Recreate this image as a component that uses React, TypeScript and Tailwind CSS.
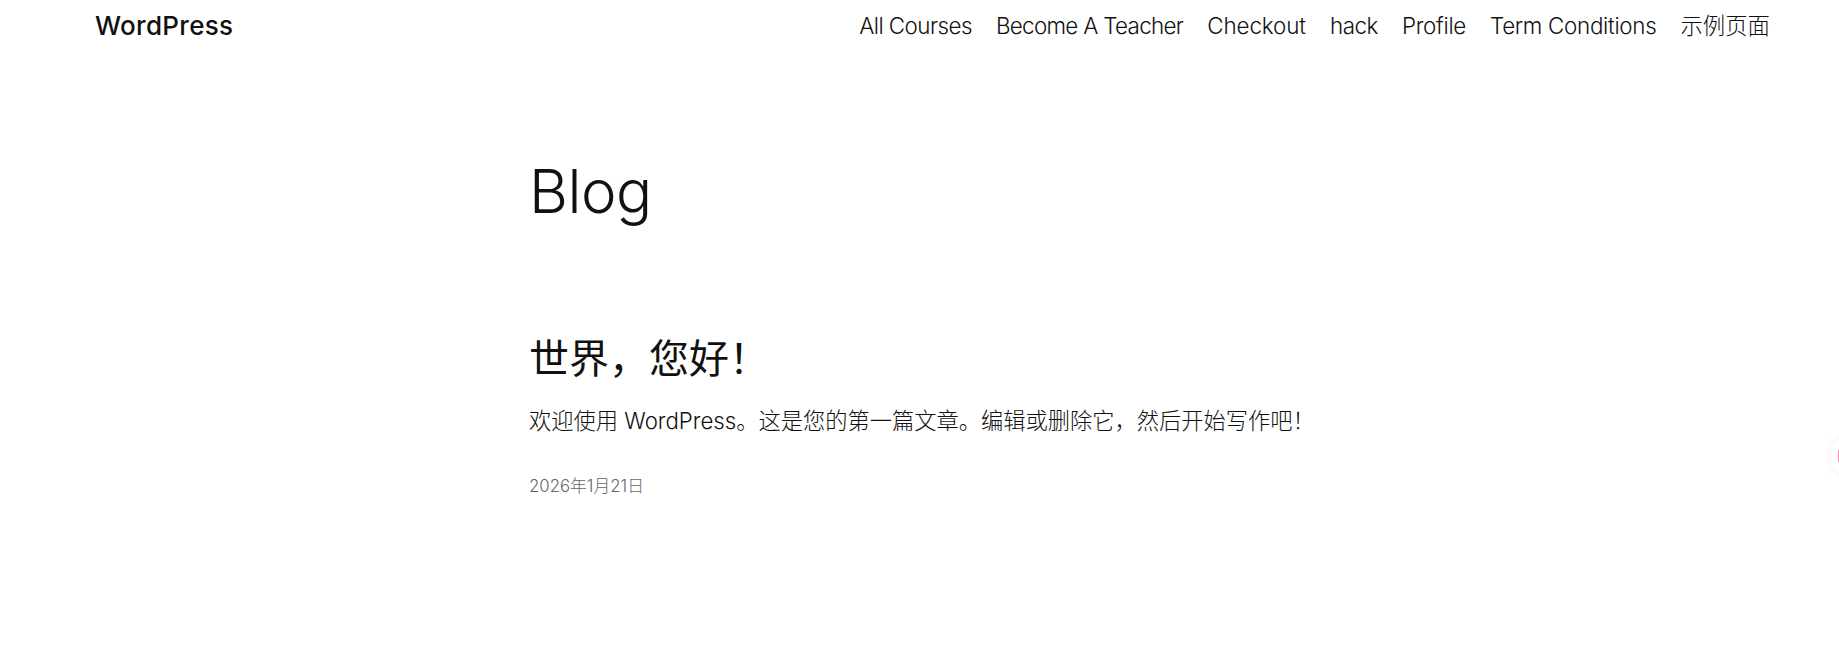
const cjk = "font-['Inter','Noto_Sans_CJK_SC',sans-serif]";

const navLinks = [
  { label: "All Courses", spacing: "tracking-[-0.55px]" },
  { label: "Become A Teacher", spacing: "tracking-[-0.68px]" },
  { label: "Checkout", spacing: "tracking-[-0.1px]" },
  { label: "hack", spacing: "tracking-[-0.45px]" },
  { label: "Profile", spacing: "tracking-[-0.3px]" },
  { label: "Term Conditions", spacing: "tracking-[-0.3px]" },
];

export default function App() {
  return (
    <div className={`relative h-[659px] overflow-hidden bg-white text-[#111111] ${cjk}`}>
      <header className="flex h-[51px] items-center justify-between pl-[95px] pr-[69px]">
        <a className="text-[26px] font-medium tracking-[0.3px]">WordPress</a>
        <nav className="flex gap-6 text-[22.4px] font-light">
          {navLinks.map((link) => (
            <a key={link.label} className={link.spacing}>
              {link.label}
            </a>
          ))}
          <a>示例页面</a>
        </nav>
      </header>

      <main className="pl-[529px] pt-[96px]">
        <h1 className="text-[60px] font-light leading-[88px] tracking-[-0.5px]">Blog</h1>
        <h2 className="mt-[96px] text-[40px] font-normal leading-[56px]">世界，您好！</h2>
        <p className="mt-[18px] text-[22.25px] font-light leading-[32px]">
          欢迎使用 WordPress。这是您的第一篇文章。编辑或删除它，然后开始写作吧！
        </p>
        <p className="mt-[37px] text-[16.8px] font-light leading-[24px] text-[#666666]">2026年1月21日</p>
      </main>

      <div className="absolute left-[1831px] top-[436px] flex h-10 w-10 items-center rounded-full bg-white pl-[7px] shadow-[0_0_12px_rgba(0,0,0,0.06)]">
        <span className="h-3 w-[2px] bg-[#f48fb1]" />
      </div>
    </div>
  );
}
